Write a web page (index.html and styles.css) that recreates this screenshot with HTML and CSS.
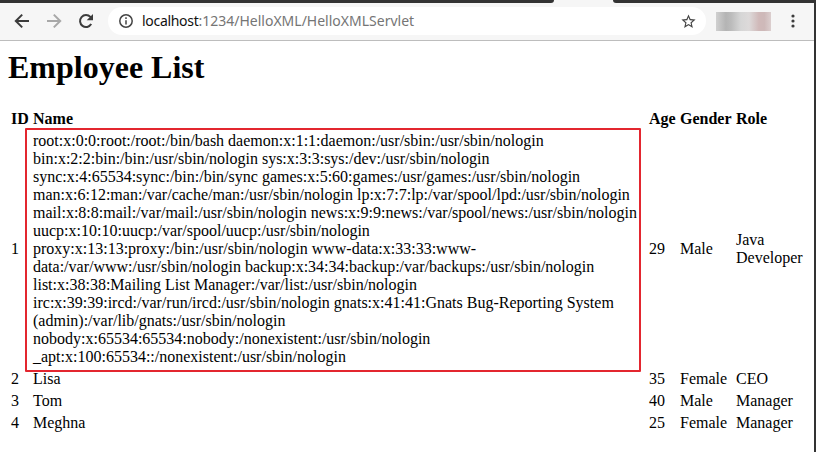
FILE: index.html
```html
<!DOCTYPE html>
<html lang="en">
<head>
<meta charset="utf-8">
<title>Employee List</title>
<link rel="stylesheet" href="styles.css">
</head>
<body>
<div class="window">
  <div class="tabstrip"><div class="tab-left"></div><div class="tab-gap"></div><div class="tab-right"></div></div>
  <header class="toolbar">
    <svg class="nav" viewBox="0 0 16 16"><path d="M15 8H2M8.2 1.6 1.8 8l6.4 6.4"/></svg>
    <svg class="nav disabled" viewBox="0 0 16 16"><path d="M1 8h13M7.8 1.6 14.2 8l-6.4 6.4"/></svg>
    <svg class="nav" viewBox="0 0 16 16"><path d="M13.2 11.1A6 6 0 1 1 12.4 3.9L13.6 5.2"/><path class="solid" d="M15 1v6.3H8.7z"/></svg>
    <div class="address">
      <svg class="info" viewBox="0 0 14 14"><circle cx="7" cy="7" r="6.2"/><path d="M7 6.2v4.4M7 3.3v1.6"/></svg>
      <div class="url"><span class="host">localhost</span><span class="path">:1234/HelloXML/HelloXMLServlet</span></div>
      <svg class="star" viewBox="0 0 24 24"><path d="M22 9.24l-7.19-.62L12 2 9.19 8.63 2 9.24l5.46 4.73L5.82 21 12 17.27 18.18 21l-1.63-7.03L22 9.24zM12 15.4l-3.76 2.27 1-4.28-3.32-2.88 4.38-.38L12 6.1l1.71 4.04 4.38.38-3.32 2.88 1 4.28L12 15.4z"/></svg>
    </div>
    <div class="extensions"></div>
    <svg class="menu" viewBox="0 0 4 14"><circle cx="2" cy="2" r="1.6"/><circle cx="2" cy="7" r="1.6"/><circle cx="2" cy="12" r="1.6"/></svg>
  </header>
  <main class="page">
    <h1>Employee List</h1>
    <table>
      <colgroup><col class="c-id"><col class="c-name"><col class="c-age"><col class="c-gender"><col class="c-role"></colgroup>
      <tr><th>ID</th><th>Name</th><th>Age</th><th>Gender</th><th>Role</th></tr>
      <tr>
        <td>1</td>
        <td class="marked">root:x:0:0:root:/root:/bin/bash daemon:x:1:1:daemon:/usr/sbin:/usr/sbin/nologin<br>
bin:x:2:2:bin:/bin:/usr/sbin/nologin sys:x:3:3:sys:/dev:/usr/sbin/nologin<br>
sync:x:4:65534:sync:/bin:/bin/sync games:x:5:60:games:/usr/games:/usr/sbin/nologin<br>
man:x:6:12:man:/var/cache/man:/usr/sbin/nologin lp:x:7:7:lp:/var/spool/lpd:/usr/sbin/nologin<br>
mail:x:8:8:mail:/var/mail:/usr/sbin/nologin news:x:9:9:news:/var/spool/news:/usr/sbin/nologin<br>
uucp:x:10:10:uucp:/var/spool/uucp:/usr/sbin/nologin<br>
proxy:x:13:13:proxy:/bin:/usr/sbin/nologin www-data:x:33:33:www-<br>
data:/var/www:/usr/sbin/nologin backup:x:34:34:backup:/var/backups:/usr/sbin/nologin<br>
list:x:38:38:Mailing List Manager:/var/list:/usr/sbin/nologin<br>
irc:x:39:39:ircd:/var/run/ircd:/usr/sbin/nologin gnats:x:41:41:Gnats Bug-Reporting System<br>
(admin):/var/lib/gnats:/usr/sbin/nologin<br>
nobody:x:65534:65534:nobody:/nonexistent:/usr/sbin/nologin<br>
_apt:x:100:65534::/nonexistent:/usr/sbin/nologin</td>
        <td>29</td><td>Male</td><td>Java<br>Developer</td>
      </tr>
      <tr><td>2</td><td>Lisa</td><td>35</td><td>Female</td><td>CEO</td></tr>
      <tr><td>3</td><td>Tom</td><td>40</td><td>Male</td><td>Manager</td></tr>
      <tr><td>4</td><td>Meghna</td><td>25</td><td>Female</td><td>Manager</td></tr>
    </table>
  </main>
</div>
</body>
</html>
```
FILE: styles.css
```css
*, *::after { box-sizing: border-box; }
body { margin: 0; background: #333; overflow: hidden; }
.window { width: 814px; height: 452px; background: #fff; }
.tabstrip { display: flex; height: 3px; background: #f6f6f6; }
.tab-left { width: 554px; background: #333; border-bottom-right-radius: 3px; }
.tab-gap { width: 59px; }
.tab-right { flex: 1; background: #333; border-bottom-left-radius: 3px; }
.toolbar {
  display: flex; align-items: center; height: 38px; padding-left: 14px;
  background: #f6f6f6; border-bottom: 1px solid #bdbdbd;
}
.nav { width: 16px; height: 16px; margin-right: 16px; margin-top: -2px; fill: none; stroke: #3c3c3c; stroke-width: 2; }
.nav .solid { fill: #3c3c3c; stroke: none; }
.disabled { stroke: #a8a8a8; }
.address {
  display: flex; align-items: center; width: 598px; height: 28px; margin-left: -2px; margin-top: -1px;
  padding: 0 9px 0 11px; border-radius: 14px; background: #fff;
}
.info { width: 14px; height: 14px; margin-right: 9px; fill: none; stroke: #444; stroke-width: 1.5; }
.url { flex: 1; font: 14px/20px "Noto Sans", sans-serif; white-space: nowrap; margin-top: -1px; }
.host { color: #111; letter-spacing: -0.3px; }
.path { color: #757575; }
.star { width: 17px; height: 17px; fill: #444; }
.extensions {
  width: 55px; height: 19px; margin-left: 10px;
  background: linear-gradient(90deg, #d0d0d0 0, #b4b4b4 18%, #bcbcbc 28%, #d6d6d6 45%, #dddada 60%, #d0b9b9 78%, #ceb9b9 88%, #dccfcf);
}
.menu { width: 4px; height: 14px; margin-left: 20px; margin-top: -1px; fill: #3c3c3c; }
.page { padding: 8px 8px 0; font: 16px/18px "Liberation Serif", serif; color: #000; }
h1 { margin: 0 0 22px; font-size: 32px; line-height: 36px; }
table { table-layout: fixed; width: 800px; border-spacing: 2px; border-collapse: separate; }
th, td { padding: 1px; text-align: left; white-space: nowrap; }
.c-id { width: 20px; }
.c-name { width: 614px; }
.c-age { width: 29px; }
.c-gender { width: 54px; }
.c-role { width: 71px; }
.marked { position: relative; }
.marked::after {
  content: ""; position: absolute; left: -7px; top: -3px; width: 616px; height: 244px;
  border: 2px solid #e3262f; border-radius: 1px;
}
```
